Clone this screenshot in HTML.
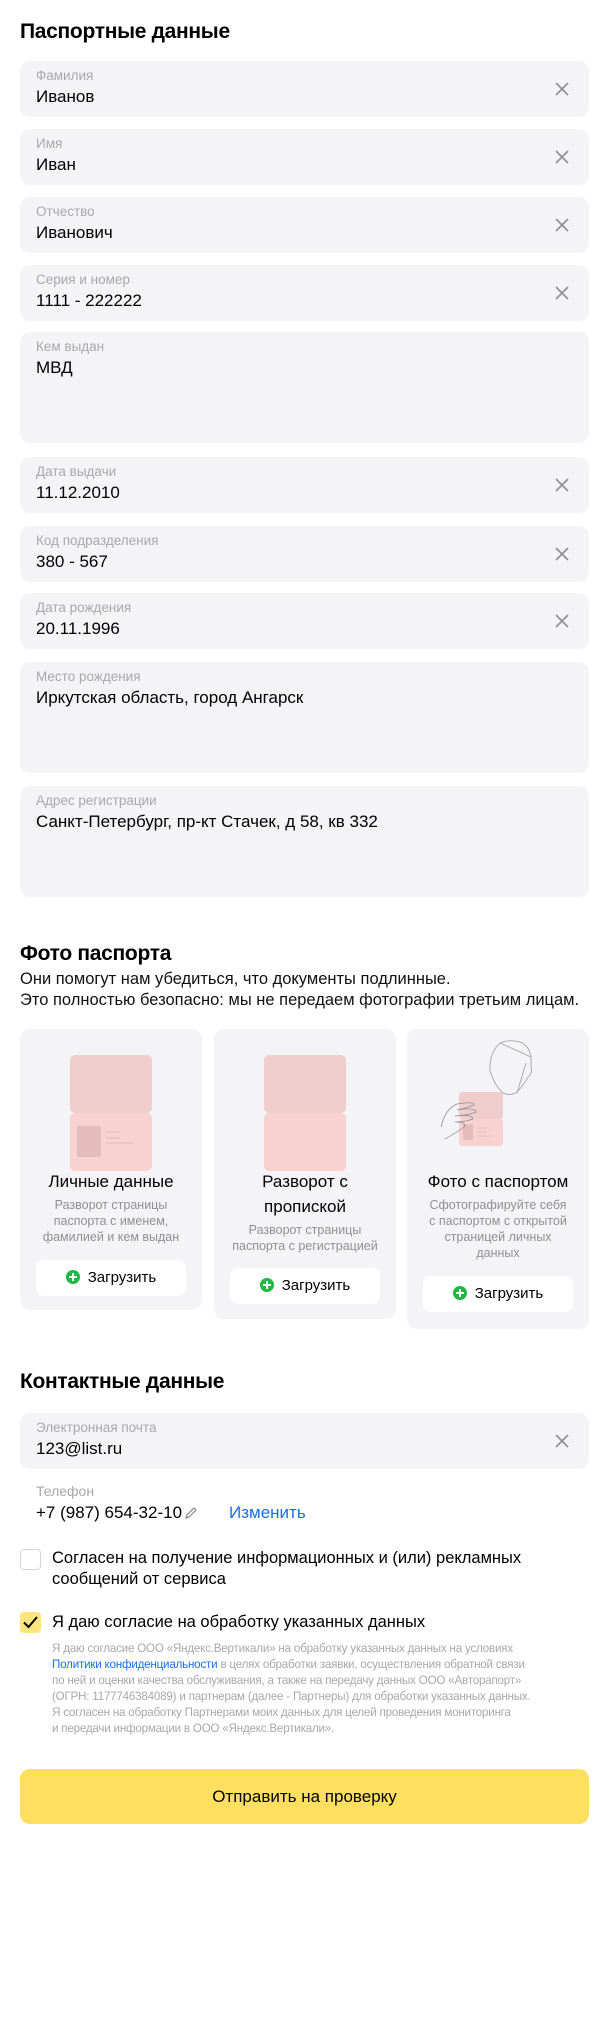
<!DOCTYPE html>
<html><head><meta charset="utf-8"><style>
*{box-sizing:border-box;margin:0;padding:0}
body{width:609px;height:2044px;background:#fff;font-family:"Liberation Sans",sans-serif;color:#000;position:relative;overflow:hidden}
.a{position:absolute}
h2{position:absolute;left:20px;font-size:21px;font-weight:bold;letter-spacing:-0.3px}
.f{position:absolute;left:20px;width:569px;height:56px;background:#f4f4f6;border-radius:10px}
.f .l{position:absolute;left:16px;top:7px;font-size:13.5px;color:#a8a8ac}
.f .v{position:absolute;left:16px;top:26px;font-size:17px;color:#000}
.f .x{position:absolute;right:20px;top:21px;width:14px;height:14px}
.card{position:absolute;width:182px;background:#f4f4f6;border-radius:10px;text-align:center}
.ct{font-size:17px;line-height:25px}
.cd{font-size:12.5px;color:#909094;line-height:16px;margin-top:3px}
.btn{position:absolute;left:16px;width:150px;height:36px;background:#fff;border-radius:8px;font-size:15px;line-height:36px}
.btn i{display:inline-block;width:14px;height:14px;border-radius:50%;background:#1cb83f;vertical-align:-2px;margin-right:8px;position:relative}
.btn i:before{content:"";position:absolute;left:3px;top:6px;width:8px;height:2px;background:#fff}
.btn i:after{content:"";position:absolute;left:6px;top:3px;width:2px;height:8px;background:#fff}
</style></head><body>
<svg width="0" height="0" style="position:absolute"><defs><symbol id="x" viewBox="0 0 14 14"><path d="M1 1L13 13M13 1L1 13" stroke="#8f8f93" stroke-width="1.6"/></symbol></defs></svg>

<h2 style="top:20px">Паспортные данные</h2>
<div class="f" style="top:61px"><div class="l">Фамилия</div><div class="v">Иванов</div><svg class="x"><use href="#x"/></svg></div>
<div class="f" style="top:129px"><div class="l">Имя</div><div class="v">Иван</div><svg class="x"><use href="#x"/></svg></div>
<div class="f" style="top:197px"><div class="l">Отчество</div><div class="v">Иванович</div><svg class="x"><use href="#x"/></svg></div>
<div class="f" style="top:265px"><div class="l">Серия и номер</div><div class="v">1111 - 222222</div><svg class="x"><use href="#x"/></svg></div>
<div class="f" style="top:332px;height:111px"><div class="l">Кем выдан</div><div class="v">МВД</div></div>
<div class="f" style="top:457px"><div class="l">Дата выдачи</div><div class="v">11.12.2010</div><svg class="x"><use href="#x"/></svg></div>
<div class="f" style="top:526px"><div class="l">Код подразделения</div><div class="v">380 - 567</div><svg class="x"><use href="#x"/></svg></div>
<div class="f" style="top:593px"><div class="l">Дата рождения</div><div class="v">20.11.1996</div><svg class="x"><use href="#x"/></svg></div>
<div class="f" style="top:662px;height:111px"><div class="l">Место рождения</div><div class="v">Иркутская область, город Ангарск</div></div>
<div class="f" style="top:786px;height:111px"><div class="l">Адрес регистрации</div><div class="v">Санкт-Петербург, пр-кт Стачек, д 58, кв 332</div></div>

<h2 style="top:942px">Фото паспорта</h2>
<div class="a" style="left:20px;top:969px;font-size:16.5px;line-height:21px;color:#111">Они помогут нам убедиться, что документы подлинные.<br>Это полностью безопасно: мы не передаем фотографии третьим лицам.</div>

<div class="card" style="left:20px;top:1029px;height:281px">
<svg class="a" style="left:50px;top:26px" width="82" height="116"><rect x="0" y="0" width="82" height="58" rx="5" fill="#f0cdcd"/><rect x="0" y="58" width="82" height="58" rx="5" fill="#f8d1d1"/><rect x="7" y="71" width="24" height="31" rx="2" fill="#e4bcbc"/><path d="M36 77h14M36 83h14M36 88h27" stroke="#e9c4c4" stroke-width="1.5"/></svg>
<div class="a" style="left:0;width:182px;top:140px"><div class="ct">Личные данные</div><div class="cd">Разворот страницы<br>паспорта с именем,<br>фамилией и кем выдан</div></div>
<div class="btn" style="top:231px"><i></i>Загрузить</div>
</div>

<div class="card" style="left:214px;top:1029px;height:290px">
<svg class="a" style="left:50px;top:26px" width="82" height="116"><rect x="0" y="0" width="82" height="58" rx="5" fill="#f0cdcd"/><rect x="0" y="58" width="82" height="58" rx="5" fill="#f8d1d1"/></svg>
<div class="a" style="left:0;width:182px;top:140px"><div class="ct">Разворот с<br>пропиской</div><div class="cd">Разворот страницы<br>паспорта с регистрацией</div></div>
<div class="btn" style="top:239px"><i></i>Загрузить</div>
</div>

<div class="card" style="left:407px;top:1029px;height:300px">
<svg class="a" style="left:0;top:0" width="182" height="130">
<rect x="52" y="63" width="44" height="27" rx="3" fill="#f0cdcd"/><rect x="52" y="90" width="44" height="27" rx="3" fill="#f8d1d1"/><rect x="56" y="95" width="10" height="16" rx="1" fill="#e4bcbc"/><path d="M70 99h10M70 103h10M70 107h16" stroke="#e9c4c4" stroke-width="1"/>
<path d="M93 14 Q82 24 83 42 Q88 57 96 64 Q102 67 109 64 Q117 56 121 48 Q126 44 124 38 L124 28 Q122 16 113 13 Q102 10 93 14 Z M93 14 L124 28 M110 64 L119 34" fill="none" stroke="#9a9a9a" stroke-width="0.8"/>
<path d="M34 98 Q38 80 50 75 Q66 72 67 76 Q60 79 50 81 M50 81 Q68 78 69 83 Q62 86 48 87 M48 87 Q66 85 66 90 Q58 93 48 93 M48 93 Q60 93 57 98 Q52 102 38 110" fill="none" stroke="#8e8e8e" stroke-width="0.8"/>
</svg>
<div class="a" style="left:0;width:182px;top:140px"><div class="ct">Фото с паспортом</div><div class="cd">Сфотографируйте себя<br>с паспортом с открытой<br>страницей личных<br>данных</div></div>
<div class="btn" style="top:247px"><i></i>Загрузить</div>
</div>

<h2 style="top:1370px">Контактные данные</h2>
<div class="f" style="top:1413px"><div class="l">Электронная почта</div><div class="v">123@list.ru</div><svg class="x"><use href="#x"/></svg></div>
<div class="a" style="left:36px;top:1483px;font-size:14px;color:#a8a8ac">Телефон</div>
<div class="a" style="left:36px;top:1503px;font-size:17px">+7 (987) 654-32-10</div>
<svg class="a" style="left:184px;top:1506px" width="14" height="14"><path d="M2 12L3 9L10 2L12 4L5 11Z" fill="none" stroke="#888" stroke-width="1.2"/></svg>
<div class="a" style="left:229px;top:1503px;font-size:17px;color:#1770e6">Изменить</div>

<div class="a" style="left:20px;top:1549px;width:21px;height:21px;border:1.5px solid #d6d6d8;border-radius:4px"></div>
<div class="a" style="left:52px;top:1548px;font-size:16.5px;line-height:21px">Согласен на получение информационных и (или) рекламных<br>сообщений от сервиса</div>
<div class="a" style="left:20px;top:1612px;width:21px;height:21px;background:#fde57e;border-radius:4px"><svg width="21" height="21"><path d="M4 10.5L8.5 15L17 5" fill="none" stroke="#000" stroke-width="2"/></svg></div>
<div class="a" style="left:52px;top:1612px;font-size:16.5px;line-height:21px">Я даю согласие на обработку указанных данных</div>
<div class="a" style="left:52px;top:1641px;font-size:11.6px;line-height:16px;color:#a8a8ac;letter-spacing:-0.2px">Я даю согласие ООО «Яндекс.Вертикали» на обработку указанных данных на условиях<br><span style="color:#1770e6">Политики конфиденциальности</span> в целях обработки заявки, осуществления обратной связи<br>по ней и оценки качества обслуживания, а также на передачу данных ООО «Авторапорт»<br>(ОГРН: 1177746384089) и партнерам (далее - Партнеры) для обработки указанных данных.<br>Я согласен на обработку Партнерами моих данных для целей проведения мониторинга<br>и передачи информации в ООО «Яндекс.Вертикали».</div>

<div class="a" style="left:20px;top:1769px;width:569px;height:55px;background:#ffdf60;border-radius:10px;text-align:center;line-height:55px;font-size:17px">Отправить на проверку</div>
</body></html>
